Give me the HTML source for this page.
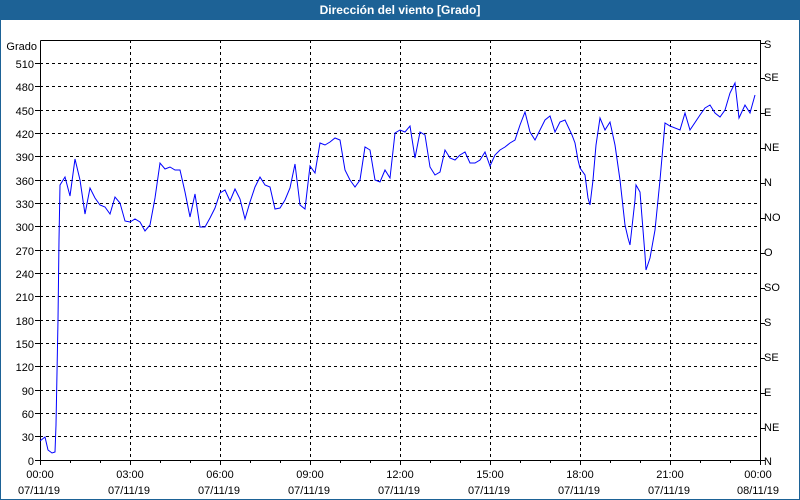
<!DOCTYPE html>
<html><head><meta charset="utf-8"><style>
html,body{margin:0;padding:0;width:800px;height:500px;overflow:hidden;background:#fff;font-family:"Liberation Sans",sans-serif}
</style></head><body>
<svg width="800" height="500" xmlns="http://www.w3.org/2000/svg" font-family="Liberation Sans, sans-serif" font-size="11">
<rect x="0" y="0" width="800" height="500" fill="#fff"/>
<rect x="0.5" y="0.5" width="799" height="499" fill="none" stroke="#1d6296"/>
<rect x="0" y="0" width="800" height="20" fill="#1d6296"/>
<text x="400" y="14" fill="#fff" font-weight="bold" font-size="12" text-anchor="middle">Dirección del viento [Grado]</text>
<g stroke="#000" stroke-dasharray="3,3" stroke-width="1">
<line x1="40" x2="760" y1="63.5" y2="63.5"/><line x1="40" x2="760" y1="86.5" y2="86.5"/><line x1="40" x2="760" y1="110.5" y2="110.5"/><line x1="40" x2="760" y1="133.5" y2="133.5"/><line x1="40" x2="760" y1="156.5" y2="156.5"/><line x1="40" x2="760" y1="180.5" y2="180.5"/><line x1="40" x2="760" y1="203.5" y2="203.5"/><line x1="40" x2="760" y1="226.5" y2="226.5"/><line x1="40" x2="760" y1="250.5" y2="250.5"/><line x1="40" x2="760" y1="273.5" y2="273.5"/><line x1="40" x2="760" y1="296.5" y2="296.5"/><line x1="40" x2="760" y1="320.5" y2="320.5"/><line x1="40" x2="760" y1="343.5" y2="343.5"/><line x1="40" x2="760" y1="366.5" y2="366.5"/><line x1="40" x2="760" y1="390.5" y2="390.5"/><line x1="40" x2="760" y1="413.5" y2="413.5"/><line x1="40" x2="760" y1="436.5" y2="436.5"/>
<line x1="130.5" x2="130.5" y1="40" y2="460"/><line x1="220.5" x2="220.5" y1="40" y2="460"/><line x1="310.5" x2="310.5" y1="40" y2="460"/><line x1="400.5" x2="400.5" y1="40" y2="460"/><line x1="490.5" x2="490.5" y1="40" y2="460"/><line x1="580.5" x2="580.5" y1="40" y2="460"/><line x1="670.5" x2="670.5" y1="40" y2="460"/>
</g>
<g stroke="#000" stroke-width="1">
<polyline points="40.5,40.5 760.5,40.5 760.5,460.5 40.5,460.5 40.5,40.5" fill="none"/>
<path d="M35 63.5h5M35 86.5h5M35 110.5h5M35 133.5h5M35 156.5h5M35 180.5h5M35 203.5h5M35 226.5h5M35 250.5h5M35 273.5h5M35 296.5h5M35 320.5h5M35 343.5h5M35 366.5h5M35 390.5h5M35 413.5h5M35 436.5h5M35 460.5h5"/>
<path d="M760 43.5h5M760 78.5h5M760 113.5h5M760 148.5h5M760 183.5h5M760 218.5h5M760 253.5h5M760 288.5h5M760 323.5h5M760 358.5h5M760 393.5h5M760 428.5h5M760 460.5h5"/>
<path d="M70.5 460v3M100.5 460v3M130.5 460v5M160.5 460v3M190.5 460v3M220.5 460v5M250.5 460v3M280.5 460v3M310.5 460v5M340.5 460v3M370.5 460v3M400.5 460v5M430.5 460v3M460.5 460v3M490.5 460v5M520.5 460v3M550.5 460v3M580.5 460v5M610.5 460v3M640.5 460v3M670.5 460v5M700.5 460v3M730.5 460v3M760.5 460v5M40.5 460v5"/>
</g>
<g fill="#000" text-anchor="end">
<text x="37" y="50">Grado</text>
<text x="34" y="68">510</text><text x="34" y="91">480</text><text x="34" y="115">450</text><text x="34" y="138">420</text><text x="34" y="161">390</text><text x="34" y="185">360</text><text x="34" y="208">330</text><text x="34" y="231">300</text><text x="34" y="255">270</text><text x="34" y="278">240</text><text x="34" y="301">210</text><text x="34" y="325">180</text><text x="34" y="348">150</text><text x="34" y="371">120</text><text x="34" y="395">90</text><text x="34" y="418">60</text><text x="34" y="441">30</text><text x="34" y="465">0</text>
</g>
<g fill="#000">
<text x="764" y="48">S</text><text x="764" y="81">SE</text><text x="764" y="116">E</text><text x="764" y="151">NE</text><text x="764" y="186">N</text><text x="764" y="221">NO</text><text x="764" y="256">O</text><text x="764" y="291">SO</text><text x="764" y="326">S</text><text x="764" y="361">SE</text><text x="764" y="396">E</text><text x="764" y="431">NE</text><text x="764" y="465">N</text>
</g>
<g fill="#000" text-anchor="middle">
<text x="40" y="478">00:00</text><text x="39" y="494">07/11/19</text>
<text x="130" y="478">03:00</text><text x="129" y="494">07/11/19</text>
<text x="220" y="478">06:00</text><text x="219" y="494">07/11/19</text>
<text x="310" y="478">09:00</text><text x="309" y="494">07/11/19</text>
<text x="400" y="478">12:00</text><text x="399" y="494">07/11/19</text>
<text x="490" y="478">15:00</text><text x="489" y="494">07/11/19</text>
<text x="580" y="478">18:00</text><text x="579" y="494">07/11/19</text>
<text x="670" y="478">21:00</text><text x="669" y="494">07/11/19</text>
<text x="758" y="478">00:00</text><text x="758" y="494">08/11/19</text>
</g>
<polyline fill="none" stroke="#0000ff" stroke-width="1" points="40,441 45,437 48,450 52,453 55,452 56,425 58,320 59,240 60,185 65,177 70,196 75,159 80,180 85,214 90,188 95,198 100,205 105,207 110,214 115,197 120,203 125,221 130,222 135,219 140,222 145,231 150,225 155,198 160,163 165,169 170,167 175,170 180,170 185,192 190,217 195,194 200,227 205,227 210,218 215,208 220,193 225,190 230,201 235,189 240,199 245,219 250,202 255,187 260,177 265,185 270,187 275,209 280,208 285,200 290,188 295,164 300,205 305,209 310,166 315,173 320,143 325,145 330,142 335,138 340,140 345,170 350,180 355,187 360,180 365,147 370,150 375,180 380,182 385,170 390,178 395,133 400,130 405,132 410,126 415,158 420,132 425,135 430,167 435,175 440,172 445,150 450,158 455,160 460,155 465,152 470,163 475,163 480,160 485,152 490,166 495,155 500,150 505,147 510,143 515,140 520,125 525,112 530,132 535,140 540,130 545,120 550,116 555,132 560,122 565,120 572,135 575,143 578,160 580,168 585,175 588,198 590,205 593,180 596,145 600,118 605,130 610,122 615,145 620,180 625,225 628,238 630,245 635,200 636,185 640,192 643,230 645,255 646,270 650,258 655,230 660,180 665,123 670,126 680,130 685,113 690,130 700,115 705,108 710,105 715,113 720,117 725,110 730,93 735,83 739,118 745,105 750,113 755,95"/>
</svg>
</body></html>
